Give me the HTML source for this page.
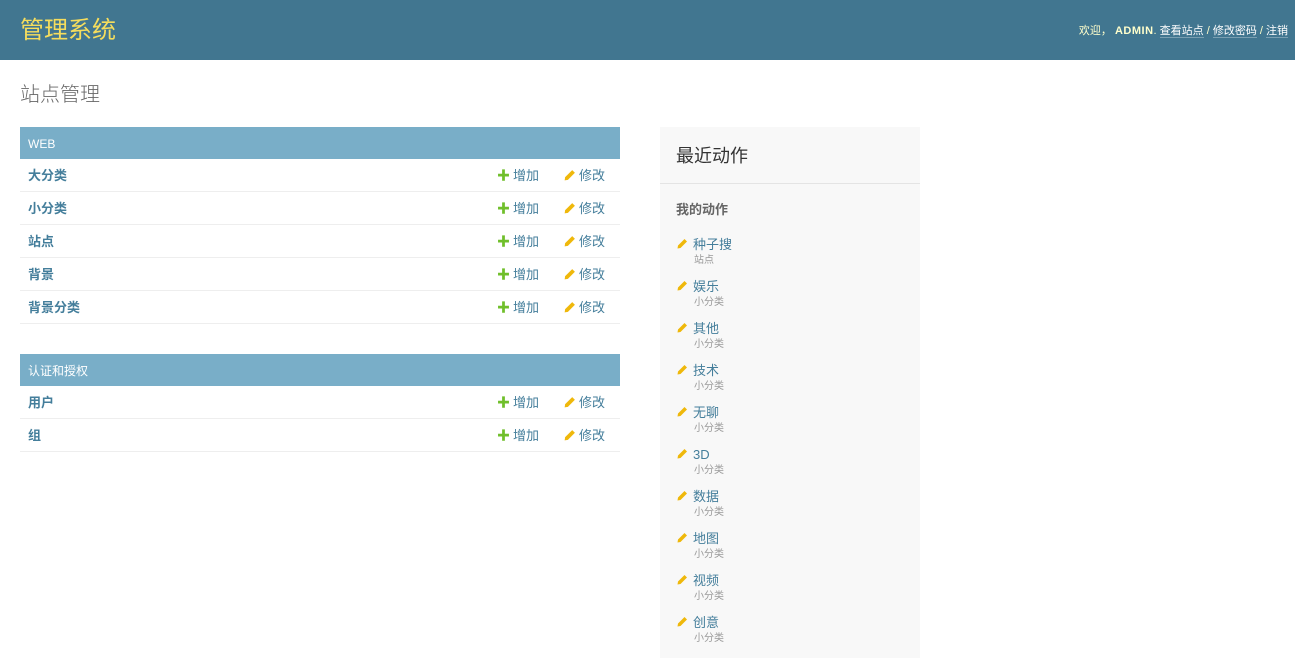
<!DOCTYPE html><html><head><meta charset="utf-8"><style>
*{margin:0;padding:0;box-sizing:border-box}
html,body{width:1295px;height:658px;overflow:hidden}
body{background:#fff;font-family:"Liberation Sans","Noto Sans CJK SC",sans-serif;position:relative}
.hdr{position:absolute;left:0;top:0;width:1295px;height:60px;background:#417690}
.ttl{position:absolute;left:20px;top:17px;font-size:24px;color:#f5dd5d;line-height:28px}
.ut{position:absolute;right:7px;top:23px;font-size:11px;color:#ffc;line-height:16px}
.ut b{letter-spacing:.5px}
.ut span{border-bottom:1px solid rgba(255,255,255,.3);color:#fff}
h1{position:absolute;left:20px;top:82px;font-size:20px;font-weight:300;color:#666;line-height:26px}
.cap{position:absolute;left:20px;width:600px;height:32px;background:#79aec8;color:#fff;font-size:12px;padding-left:8px;line-height:34px}
.row{position:absolute;left:20px;width:600px;height:33px;border-bottom:1px solid #eee;font-size:13px;line-height:33px}
.row b{position:absolute;left:8px;color:#447e9b}
.add{position:absolute;left:477px;color:#447e9b}
.chg{position:absolute;left:543px;color:#447e9b}
.plus{color:#70bf2b;font-weight:bold;font-size:13px;margin-right:3px}
.pen{display:inline-block;vertical-align:middle;margin-right:3px;margin-top:-3px}
.side{position:absolute;left:660px;top:127px;width:260px;height:540px;background:#f8f8f8}
.side h2{position:absolute;left:16px;top:17px;font-size:18px;font-weight:400;color:#333;line-height:24px}
.side .ln{position:absolute;left:0;top:56px;width:260px;height:1px;background:#e4e4e4}
.side h3{position:absolute;left:16px;top:74px;font-size:13px;color:#666;line-height:18px}
.it{position:absolute;left:16px;font-size:13px;color:#447e9b;line-height:18px}
.it .pen{margin-right:5px}
.it small{display:block;font-size:10px;color:#999;padding-left:18px;line-height:14px}
</style></head><body>
<div class="hdr"><div class="ttl">管理系统</div>
<div class="ut">欢迎， <b>ADMIN</b>. <span>查看站点</span> / <span>修改密码</span> / <span>注销</span></div></div>
<h1>站点管理</h1>
<div class="cap" style="top:127px">WEB</div>
<div class="row" style="top:159px"><b>大分类</b><span class="add"><span class="plus">✚</span>增加</span><span class="chg"><svg class="pen" width="13" height="13" viewBox="0 0 12 12"><path d="M1.5 10.5L2 7.5 8.5 1 11 3.5 4.5 10Z" fill="#efb80b"/></svg>修改</span></div>
<div class="row" style="top:192px"><b>小分类</b><span class="add"><span class="plus">✚</span>增加</span><span class="chg"><svg class="pen" width="13" height="13" viewBox="0 0 12 12"><path d="M1.5 10.5L2 7.5 8.5 1 11 3.5 4.5 10Z" fill="#efb80b"/></svg>修改</span></div>
<div class="row" style="top:225px"><b>站点</b><span class="add"><span class="plus">✚</span>增加</span><span class="chg"><svg class="pen" width="13" height="13" viewBox="0 0 12 12"><path d="M1.5 10.5L2 7.5 8.5 1 11 3.5 4.5 10Z" fill="#efb80b"/></svg>修改</span></div>
<div class="row" style="top:258px"><b>背景</b><span class="add"><span class="plus">✚</span>增加</span><span class="chg"><svg class="pen" width="13" height="13" viewBox="0 0 12 12"><path d="M1.5 10.5L2 7.5 8.5 1 11 3.5 4.5 10Z" fill="#efb80b"/></svg>修改</span></div>
<div class="row" style="top:291px"><b>背景分类</b><span class="add"><span class="plus">✚</span>增加</span><span class="chg"><svg class="pen" width="13" height="13" viewBox="0 0 12 12"><path d="M1.5 10.5L2 7.5 8.5 1 11 3.5 4.5 10Z" fill="#efb80b"/></svg>修改</span></div>
<div class="cap" style="top:354px">认证和授权</div>
<div class="row" style="top:386px"><b>用户</b><span class="add"><span class="plus">✚</span>增加</span><span class="chg"><svg class="pen" width="13" height="13" viewBox="0 0 12 12"><path d="M1.5 10.5L2 7.5 8.5 1 11 3.5 4.5 10Z" fill="#efb80b"/></svg>修改</span></div>
<div class="row" style="top:419px"><b>组</b><span class="add"><span class="plus">✚</span>增加</span><span class="chg"><svg class="pen" width="13" height="13" viewBox="0 0 12 12"><path d="M1.5 10.5L2 7.5 8.5 1 11 3.5 4.5 10Z" fill="#efb80b"/></svg>修改</span></div>
<div class="side"><h2>最近动作</h2><div class="ln"></div><h3>我的动作</h3>
<div class="it" style="top:109px"><svg class="pen" width="12" height="12" viewBox="0 0 12 12"><path d="M1.5 10.5L2 7.5 8.5 1 11 3.5 4.5 10Z" fill="#efb80b"/></svg>种子搜<small>站点</small></div>
<div class="it" style="top:151px"><svg class="pen" width="12" height="12" viewBox="0 0 12 12"><path d="M1.5 10.5L2 7.5 8.5 1 11 3.5 4.5 10Z" fill="#efb80b"/></svg>娱乐<small>小分类</small></div>
<div class="it" style="top:193px"><svg class="pen" width="12" height="12" viewBox="0 0 12 12"><path d="M1.5 10.5L2 7.5 8.5 1 11 3.5 4.5 10Z" fill="#efb80b"/></svg>其他<small>小分类</small></div>
<div class="it" style="top:235px"><svg class="pen" width="12" height="12" viewBox="0 0 12 12"><path d="M1.5 10.5L2 7.5 8.5 1 11 3.5 4.5 10Z" fill="#efb80b"/></svg>技术<small>小分类</small></div>
<div class="it" style="top:277px"><svg class="pen" width="12" height="12" viewBox="0 0 12 12"><path d="M1.5 10.5L2 7.5 8.5 1 11 3.5 4.5 10Z" fill="#efb80b"/></svg>无聊<small>小分类</small></div>
<div class="it" style="top:319px"><svg class="pen" width="12" height="12" viewBox="0 0 12 12"><path d="M1.5 10.5L2 7.5 8.5 1 11 3.5 4.5 10Z" fill="#efb80b"/></svg>3D<small>小分类</small></div>
<div class="it" style="top:361px"><svg class="pen" width="12" height="12" viewBox="0 0 12 12"><path d="M1.5 10.5L2 7.5 8.5 1 11 3.5 4.5 10Z" fill="#efb80b"/></svg>数据<small>小分类</small></div>
<div class="it" style="top:403px"><svg class="pen" width="12" height="12" viewBox="0 0 12 12"><path d="M1.5 10.5L2 7.5 8.5 1 11 3.5 4.5 10Z" fill="#efb80b"/></svg>地图<small>小分类</small></div>
<div class="it" style="top:445px"><svg class="pen" width="12" height="12" viewBox="0 0 12 12"><path d="M1.5 10.5L2 7.5 8.5 1 11 3.5 4.5 10Z" fill="#efb80b"/></svg>视频<small>小分类</small></div>
<div class="it" style="top:487px"><svg class="pen" width="12" height="12" viewBox="0 0 12 12"><path d="M1.5 10.5L2 7.5 8.5 1 11 3.5 4.5 10Z" fill="#efb80b"/></svg>创意<small>小分类</small></div>
</div>
</body></html>
